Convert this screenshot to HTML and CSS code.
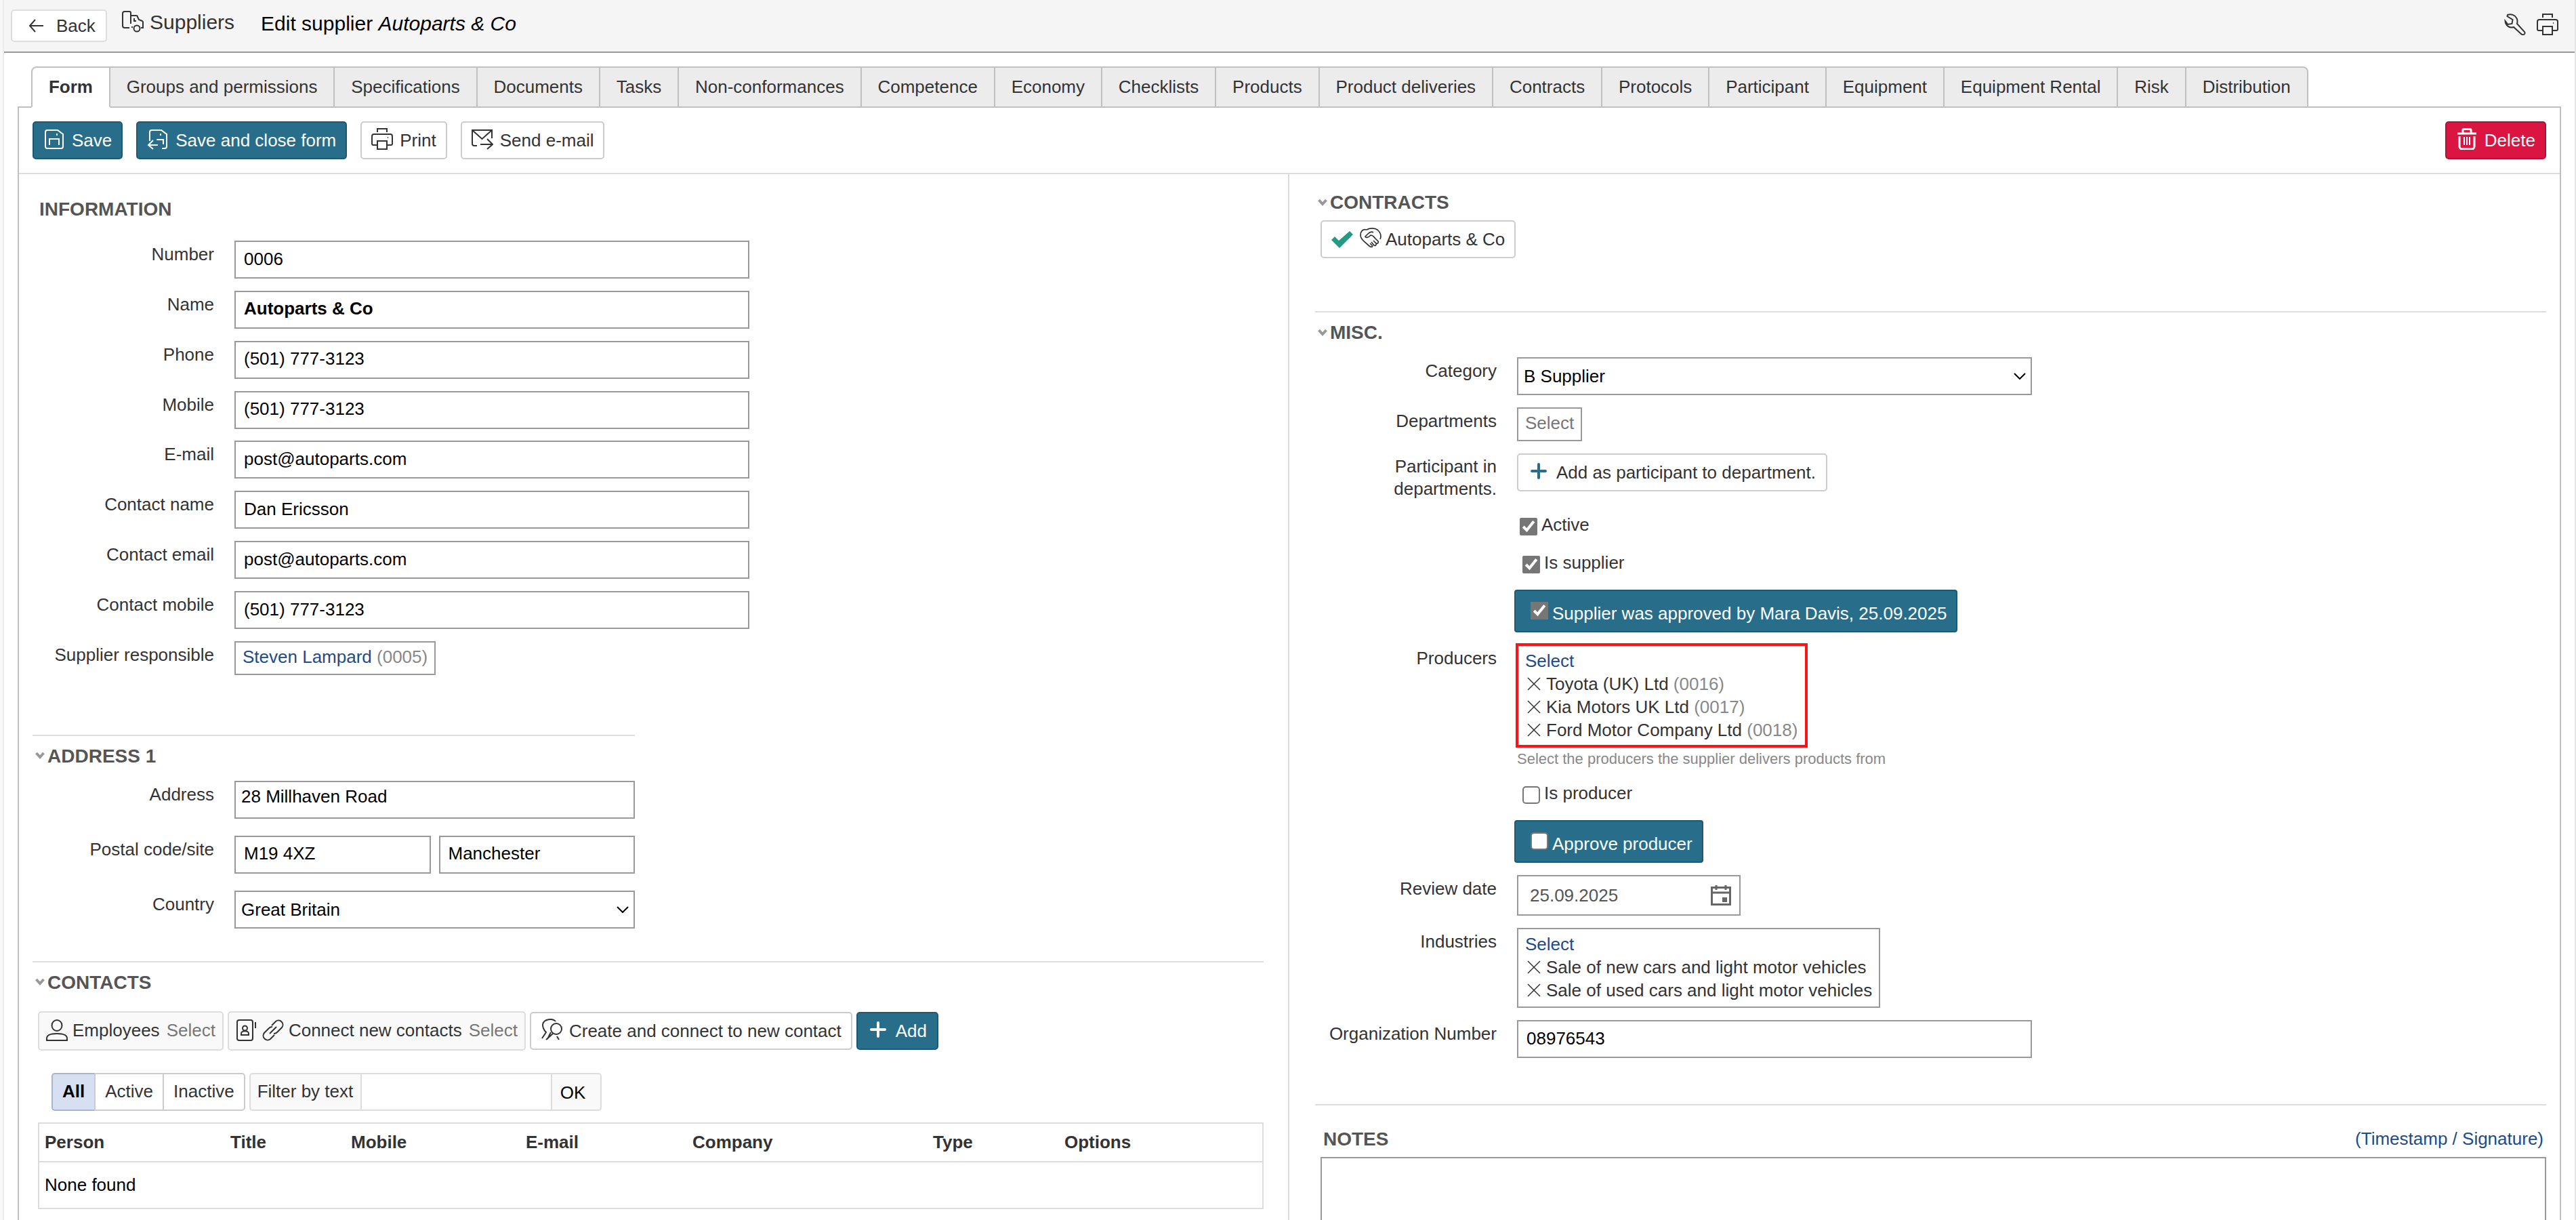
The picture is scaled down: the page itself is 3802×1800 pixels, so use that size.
FILE: index.html
```
<!DOCTYPE html>
<html lang="en">

<head>
    <meta charset="UTF-8">
    <meta name="viewport" content="width=device-width, initial-scale=1.0">
    <title>Edit supplier Autoparts &amp; Co</title>
    <link rel="stylesheet" href="styles.css">
</head>

<body>
    <div class="page">

        <header class="topbar">
            <a class="back">
                <svg class="icon" viewBox="0 0 32 32"><path d="M26 16H6M14 7L6 16l8 9" /></svg>
                Back
            </a>
            <div class="module">
                <svg class="icon" viewBox="0 0 32 32"><path d="M11 25H4a3 3 0 0 1-3-3V4a3 3 0 0 1 3-3h7a2 2 0 0 1 2 2v16M13 7h8a2 2 0 0 1 2 2l2 4 5 2a2 2 0 0 1 1 2v8h-3M18 11v4h3M14 24h2" /><circle cx="22" cy="26" r="4.500" /></svg>
                <span>Suppliers</span>
            </div>
            <div class="title">Edit supplier <i>Autoparts &amp; Co</i></div>
            <div class="tools">
                <svg class="icon" viewBox="0 0 32 32"><path d="M5 2c5-2 11 0 13.500 5 1.500 3 1 6 .5 8l11 12c2 3-2 6-5 3L14 20c-6 2-12-2-12.500-9l4 5 6-1 1-6-8-5z" /></svg>
                <svg class="icon" viewBox="0 0 32 32"><path d="M9 6V1h14v5M8 25H3a2 2 0 0 1-2-2V12a3 3 0 0 1 3-3h24a3 3 0 0 1 3 3v11a2 2 0 0 1-2 2h-5M9 19h14v12H9zM24 14h1" /></svg>
            </div>
        </header>

        <nav class="tabs">
            <a class="tab active">Form</a>
            <a class="tab">Groups and permissions</a>
            <a class="tab">Specifications</a>
            <a class="tab">Documents</a>
            <a class="tab">Tasks</a>
            <a class="tab">Non-conformances</a>
            <a class="tab">Competence</a>
            <a class="tab">Economy</a>
            <a class="tab">Checklists</a>
            <a class="tab">Products</a>
            <a class="tab">Product deliveries</a>
            <a class="tab">Contracts</a>
            <a class="tab">Protocols</a>
            <a class="tab">Participant</a>
            <a class="tab">Equipment</a>
            <a class="tab">Equipment Rental</a>
            <a class="tab">Risk</a>
            <a class="tab">Distribution</a>
        </nav>

        <main class="panel">
            <div class="toolbar">
                <a class="btn primary">
                    <svg class="icon" viewBox="0 0 32 32"><path d="M6 3h15l8 6v18a3 3 0 0 1-3 3H6a3 3 0 0 1-3-3V6a3 3 0 0 1 3-3zM9 25v-9h14v9M20 8v3" /></svg>
                    Save
                </a>
                <a class="btn primary">
                    <svg class="icon" viewBox="0 0 32 32"><path d="M4 19V6a3 3 0 0 1 3-3h14l8 6v18a3 3 0 0 1-3 3h-4M14 17h10v7M20 8v3M16 25H2M9 18l-7 7 7 6" /></svg>
                    Save and close form
                </a>
                <a class="btn">
                    <svg class="icon" viewBox="0 0 32 32"><path d="M9 6V1h14v5M8 25H3a2 2 0 0 1-2-2V12a3 3 0 0 1 3-3h24a3 3 0 0 1 3 3v11a2 2 0 0 1-2 2h-5M9 19h14v12H9zM24 14h1" /></svg>
                    Print
                </a>
                <a class="btn">
                    <svg class="icon" viewBox="0 0 32 32"><path d="M8 26H4a3 3 0 0 1-3-3V3h29v12M1 3l14.500 13L30 3M13 24h18M23 16l8 8-8 7" /></svg>
                    Send e-mail
                </a>
                <a class="btn danger">
                    <svg class="icon bold" viewBox="0 0 32 32"><path d="M2 8h28M10 7V3a1.500 1.500 0 0 1 1.500-1.500h9A1.500 1.500 0 0 1 22 3v4M5 12v15a4 4 0 0 0 4 4h14a4 4 0 0 0 4-4V12" /><path class="thin" d="M12 13v12M16 13v12M20 13v12" /></svg>
                    Delete
                </a>
            </div>

            <div class="columns">

                <!-- Left column -->
                <div class="col left">
                    <section class="information">
                        <h2>INFORMATION</h2>
                        <div class="row"><label>Number</label><input type="text" value="0006"></div>
                        <div class="row"><label>Name</label><input class="strong" type="text" value="Autoparts &amp; Co"></div>
                        <div class="row"><label>Phone</label><input type="text" value="(501) 777-3123"></div>
                        <div class="row"><label>Mobile</label><input type="text" value="(501) 777-3123"></div>
                        <div class="row"><label>E-mail</label><input type="text" value="post@autoparts.com"></div>
                        <div class="row"><label>Contact name</label><input type="text" value="Dan Ericsson"></div>
                        <div class="row"><label>Contact email</label><input type="text" value="post@autoparts.com"></div>
                        <div class="row"><label>Contact mobile</label><input type="text" value="(501) 777-3123"></div>
                        <div class="row"><label>Supplier responsible</label>
                            <div class="picker"><a class="link">Steven Lampard</a> <span class="code">(0005)</span></div>
                        </div>
                    </section>

                    <section class="address">
                        <h2><svg class="fold" viewBox="0 0 14 12"><path d="M1.500 2L7 8l5.500-6" /></svg>ADDRESS 1</h2>
                        <div class="row"><label>Address</label><textarea>28 Millhaven Road</textarea></div>
                        <div class="row"><label>Postal code/site</label>
                            <div class="pair"><input type="text" value="M19 4XZ"><input type="text" value="Manchester"></div>
                        </div>
                        <div class="row"><label>Country</label>
                            <div class="select">Great Britain<svg viewBox="0 0 18 10"><path d="M1 1l8 8 8-8" /></svg></div>
                        </div>
                    </section>

                    <section class="contacts">
                        <h2><svg class="fold" viewBox="0 0 14 12"><path d="M1.500 2L7 8l5.500-6" /></svg>CONTACTS</h2>
                        <div class="actions">
                            <div class="group">
                                <svg class="icon" viewBox="0 0 32 32"><ellipse cx="16" cy="9" rx="7.500" ry="8" /><path d="M1 31v-3c0-4 5-7 15-7s15 3 15 7v3z" /></svg>
                                <span>Employees</span>
                                <span class="muted">Select</span>
                            </div>
                            <div class="group">
                                <svg class="icon" viewBox="0 0 32 32"><rect x="2" y="1" width="23" height="30" rx="3" /><circle cx="13.500" cy="13" r="3.500" /><path d="M8 23v-2c0-5 11-5 11 0v2zM29 4v9" /></svg>
                                <svg class="icon" viewBox="0 0 32 32"><path d="M11 21L21 11M14 9l6-6a6.400 6.400 0 0 1 9 9l-7 7a6.400 6.400 0 0 1-5 2M18 23l-6 6a6.400 6.400 0 0 1-9-9l7-7a6.400 6.400 0 0 1 5-2" /></svg>
                                <span>Connect new contacts</span>
                                <span class="muted">Select</span>
                            </div>
                            <a class="btn">
                                <svg class="icon" viewBox="0 0 32 32"><circle cx="23" cy="15" r="8" /><path d="M22 4C18-1 4 0 3 9c0 5 2 8 5 11l-6 9M18 22L8 31M24 26l3 5M15 20l-5 10" /></svg>
                                Create and connect to new contact
                            </a>
                            <a class="btn primary add">
                                <svg class="plus" viewBox="0 0 24 24"><path d="M12 2v20M2 12h20" /></svg>
                                Add
                            </a>
                        </div>
                        <div class="filters">
                            <div class="segments">
                                <a class="segment selected">All</a>
                                <a class="segment">Active</a>
                                <a class="segment">Inactive</a>
                            </div>
                            <div class="search">
                                <span>Filter by text</span>
                                <input type="text">
                                <a>OK</a>
                            </div>
                        </div>
                        <table>
                            <thead>
                                <tr>
                                    <th class="person">Person</th>
                                    <th class="job">Title</th>
                                    <th class="mobile">Mobile</th>
                                    <th class="mail">E-mail</th>
                                    <th class="company">Company</th>
                                    <th class="type">Type</th>
                                    <th>Options</th>
                                </tr>
                            </thead>
                            <tbody>
                                <tr>
                                    <td colspan="7">None found</td>
                                </tr>
                            </tbody>
                        </table>
                    </section>
                </div>

                <!-- Right column -->
                <div class="col right">
                    <section class="contracts">
                        <h2><svg class="fold" viewBox="0 0 14 12"><path d="M1.500 2L7 8l5.500-6" /></svg>CONTRACTS</h2>
                        <a class="btn contract">
                            <svg class="tick" viewBox="0 0 32 25"><path d="M0 13l5-5 6 6L27 0l5 5-20 20z" /></svg>
                            <svg class="icon" viewBox="0 0 32 30"><path d="M10 3C4 1 1 6 1 11c0 4 3 7 5 9l8 7c2 1.500 4 2 5 0M10 3c5-3 13-3 17 1 4 4 5 8 3 13M20 7c-3-2-6 0-8 2l-4 4c1 3 5 1 8-2 4 0 5 3 7 5l4 4c1 2-1 4-3 3l-4-4M24 23c1 2-1 4-3 3l-4-5M19 27l-4-4" /></svg>
                            Autoparts &amp; Co
                        </a>
                    </section>

                    <section class="misc">
                        <h2><svg class="fold" viewBox="0 0 14 12"><path d="M1.500 2L7 8l5.500-6" /></svg>MISC.</h2>
                        <div class="row"><label>Category</label>
                            <div class="select">B Supplier<svg viewBox="0 0 18 10"><path d="M1 1l8 8 8-8" /></svg></div>
                        </div>
                        <div class="row"><label>Departments</label>
                            <div class="picker"><span class="muted">Select</span></div>
                        </div>
                        <div class="row participant"><label>Participant in departments.</label>
                            <a class="btn add">
                                <svg class="plus" viewBox="0 0 24 24"><path d="M12 2v20M2 12h20" /></svg>
                                Add as participant to department.
                            </a>
                        </div>
                        <div class="row check first"><input type="checkbox" checked>Active</div>
                        <div class="row check"><input type="checkbox" checked>Is supplier</div>
                        <div class="row approve"><span class="banner"><input type="checkbox" checked>Supplier was approved by Mara Davis, 25.09.2025</span></div>
                        <div class="row"><label>Producers</label>
                            <div>
                                <div class="list marked">
                                    <a class="link">Select</a>
                                    <div class="item"><svg viewBox="0 0 20 20"><path d="M1 1l18 18M19 1L1 19" /></svg><span>Toyota (UK) Ltd <span class="code">(0016)</span></span></div>
                                    <div class="item"><svg viewBox="0 0 20 20"><path d="M1 1l18 18M19 1L1 19" /></svg><span>Kia Motors UK Ltd <span class="code">(0017)</span></span></div>
                                    <div class="item"><svg viewBox="0 0 20 20"><path d="M1 1l18 18M19 1L1 19" /></svg><span>Ford Motor Company Ltd <span class="code">(0018)</span></span></div>
                                </div>
                                <div class="hint">Select the producers the supplier delivers products from</div>
                            </div>
                        </div>
                        <div class="row check producer"><input type="checkbox">Is producer</div>
                        <div class="row approve"><span class="banner"><input type="checkbox">Approve producer</span></div>
                        <div class="row"><label>Review date</label>
                            <div class="date">25.09.2025<svg viewBox="0 0 30 30"><path d="M1.500 3.500h27v25h-27zM1 11h28M8 0v7M22 0v7" /><rect x="17" y="18" width="7" height="7" /></svg></div>
                        </div>
                        <div class="row"><label>Industries</label>
                            <div class="list">
                                <a class="link">Select</a>
                                <div class="item"><svg viewBox="0 0 20 20"><path d="M1 1l18 18M19 1L1 19" /></svg><span>Sale of new cars and light motor vehicles</span></div>
                                <div class="item"><svg viewBox="0 0 20 20"><path d="M1 1l18 18M19 1L1 19" /></svg><span>Sale of used cars and light motor vehicles</span></div>
                            </div>
                        </div>
                        <div class="row"><label>Organization Number</label><input type="text" value="08976543"></div>
                    </section>

                    <section class="notes">
                        <div class="notes-head">
                            <h2>NOTES</h2>
                            <a class="link">(Timestamp / Signature)</a>
                        </div>
                        <textarea></textarea>
                    </section>
                </div>
            </div>
        </main>
    </div>
</body>

</html>
```

FILE: styles.css
```
* {
    box-sizing: border-box;
}

body {
    margin: 0;
    background-color: #f8f8f8;
    color: #333;
    font-family: "Liberation Sans", Arial, sans-serif;
    font-size: 26px;
    line-height: 34px;
}

.page {
    height: 1800px;
    margin-left: 4px;
    border-left: 2px solid #ececec;
    border-right: 2px solid #e5e5e5;
    background-color: #fff;
    overflow: hidden;
    display: flex;
    flex-direction: column;
}

svg {
    display: block;
    flex: none;
    fill: none;
    stroke: currentColor;
    stroke-width: 2;
}

.icon {
    width: 32px;
    height: 32px;
}

.icon.bold {
    stroke-width: 3;
}

.icon .thin {
    stroke-width: 2;
}

.link {
    color: #204a8c;
}

.code {
    color: #888;
}

.muted {
    color: #777;
}

/* Top bar */

.topbar {
    flex: none;
    height: 78px;
    padding: 14px 24px 0 10px;
    background-color: #f5f5f5;
    border-bottom: 2px solid #999;
    display: flex;
    align-items: flex-start;
    font-size: 30px;
}

.back {
    width: 142px;
    height: 48px;
    padding-left: 20px;
    border: 2px solid #ddd;
    border-radius: 5px;
    background-color: #fff;
    display: flex;
    align-items: center;
    gap: 13px;
    font-size: 26px;
}

.module {
    display: flex;
    gap: 9px;
    margin: 2px 0 0 22px;
}

.title {
    margin: 4px 0 0 39px;
    color: #000;
}

.tools {
    display: flex;
    gap: 16px;
    margin: 6px 0 0 auto;
}

/* Tabs */

.tabs {
    display: flex;
    padding: 20px 0 0 40px;
    margin-bottom: -2px;
    position: relative;
}

.tab {
    height: 61px;
    padding: 0 23.900px;
    border: 2px solid #c0c0c0;
    border-left: none;
    background-color: #ececec;
    line-height: 57px;
}

.tab.active {
    border-left: 2px solid #c0c0c0;
    border-bottom-color: #fff;
    border-top-left-radius: 8px;
    background-color: #fff;
    font-weight: bold;
}

.tab:last-child {
    border-top-right-radius: 8px;
}

/* Panel */

.panel {
    flex: 1;
    margin: 0 20px;
    border: 2px solid #c0c0c0;
    border-bottom: none;
    display: flex;
    flex-direction: column;
}

.toolbar {
    height: 98px;
    padding: 20px 20px 0;
    border-bottom: 2px solid #ddd;
    display: flex;
    align-items: flex-start;
    gap: 20px;
}

.btn {
    height: 56px;
    padding: 0 14px;
    border: 2px solid #ccc;
    border-radius: 5px;
    background-color: #fff;
    display: inline-flex;
    align-items: center;
    gap: 10px;
    white-space: nowrap;
}

.btn .icon {
    margin-bottom: 4px;
}

.btn.primary {
    border-color: #1f5870;
    background-color: #286e8a;
    color: #fff;
}

.btn.danger {
    margin-left: auto;
    border-color: #b01035;
    background-color: #db1541;
    color: #fff;
}

.plus {
    width: 24px;
    height: 24px;
    margin-bottom: 4px;
    stroke-width: 4;
    stroke-linecap: round;
    color: #286e8a;
}

.primary .plus {
    color: #fff;
}

.btn.add {
    padding: 0 15px 0 18px;
    gap: 14px;
}

.columns {
    flex: 1;
    display: flex;
}

.left {
    width: 1875px;
    padding: 34px 36px 0 20px;
    border-right: 2px solid #ddd;
}

.right {
    flex: 1;
    padding: 24px 20px 0 38px;
}

h2 {
    margin: 0;
    padding-left: 4px;
    color: #555;
    font-size: 28px;
    line-height: 35px;
    display: flex;
    align-items: center;
    gap: 4px;
}

.fold {
    width: 14px;
    height: 12px;
    stroke-width: 4;
    color: #999;
}

/* Form rows */

.row {
    display: flex;
    align-items: flex-start;
    margin-bottom: 18px;
}

.row label {
    width: 268px;
    margin-right: 30px;
    padding-top: 3px;
    text-align: right;
}

.row input[type=text],
.select,
textarea {
    width: 760px;
    height: 56px;
    margin: 0;
    padding: 0 12px 2px;
    border: 2px solid #999;
    background-color: #fff;
    color: #000;
    font: inherit;
}

.row input.strong {
    font-weight: bold;
}

.select {
    padding: 0 7px 0 8px;
    display: flex;
    align-items: center;
    justify-content: space-between;
}

.select svg {
    width: 18px;
    height: 10px;
}

textarea {
    display: block;
    padding: 4px 8px;
    resize: none;
    overflow: hidden;
}

.picker {
    height: 50px;
    padding: 4px 10px;
    border: 2px solid #999;
}

.information h2 {
    padding-left: 10px;
    margin-bottom: 29px;
}

.information .row {
    margin-bottom: 17.860px;
}

.address {
    width: 889px;
    margin-top: 88px;
}

.address,
.contacts,
.misc,
.notes {
    border-top: 2px solid #ddd;
    padding-top: 12px;
}

.address h2,
.misc h2 {
    margin-bottom: 19px;
}

.address .row {
    margin-bottom: 25px;
}

.address .select,
.address textarea {
    width: 591px;
}

.pair {
    display: flex;
    gap: 12px;
}

.pair input[type=text] {
    width: 289.500px;
}

/* Contacts */

.contacts {
    margin-top: 48px;
}

.contacts h2 {
    margin-bottom: 25px;
}

.actions {
    display: flex;
    align-items: center;
    gap: 6px;
    padding-left: 8px;
}

.group {
    height: 58px;
    padding: 0 10px 2px;
    border: 2px solid #ddd;
    border-radius: 5px;
    background-color: #f9f9f9;
    display: flex;
    align-items: center;
    gap: 7px;
}

.group .muted {
    margin-left: 3px;
}

.filters {
    display: flex;
    gap: 6px;
    padding: 33px 0 17px 28px;
}

.segments {
    display: flex;
}

.segment {
    height: 56px;
    padding: 0 14px;
    border: 2px solid #ccc;
    border-left: none;
    line-height: 51px;
}

.segment.selected {
    border: 2px solid #aab6c8;
    border-right-color: #ccc;
    border-radius: 5px 0 0 5px;
    background-color: #d6e0f2;
    color: #000;
    font-weight: bold;
}

.segment:last-child {
    border-radius: 0 5px 5px 0;
}

.search {
    width: 520px;
    height: 56px;
    border: 2px solid #ddd;
    border-radius: 5px;
    background-color: #f9f9f9;
    display: flex;
    line-height: 51px;
}

.search span {
    width: 162px;
    padding-left: 10px;
}

.search input {
    width: 283px;
    border: 2px solid #ddd;
    border-width: 0 2px;
    background-color: #fff;
}

.search a {
    padding-left: 12px;
    color: #000;
    line-height: 54px;
}

table {
    width: 1809px;
    margin-left: 8px;
    border: 2px solid #ddd;
    border-spacing: 0;
    table-layout: fixed;
}

th {
    height: 57px;
    padding: 0 8px 0 9px;
    border-bottom: 2px solid #ddd;
    text-align: left;
}

td {
    height: 67px;
    padding: 0 8px;
    color: #000;
}

.person {
    width: 273px;
    padding-left: 8px;
}

.job {
    width: 178px;
}

.mobile {
    width: 258px;
}

.mail {
    width: 246px;
}

.company {
    width: 355px;
}

.type {
    width: 194px;
}

/* Right column */

.contracts {
    height: 178px;
}

.contracts h2 {
    margin-bottom: 9px;
}

.contract {
    margin-left: 8px;
    gap: 6px;
}

.contract .tick {
    width: 32px;
    height: 25px;
    margin-right: 4px;
    fill: #239a83;
    stroke: none;
}

.contract .icon {
    height: 30px;
    stroke-width: 1.700;
}

.participant {
    height: 70px;
}

.participant label {
    padding-left: 90px;
    line-height: 33px;
}

.check {
    height: 34px;
    padding-left: 306px;
    margin-bottom: 22px;
}

.check.first {
    padding-left: 302px;
}

.check + .approve {
    margin-top: 23px;
}

.check:has(+ .approve) {
    margin-bottom: 0;
}

input[type=checkbox] {
    width: 26px;
    height: 26px;
    margin: 7px 6px 0 0;
    accent-color: #767676;
}

input[type=checkbox]:not(:checked) {
    appearance: none;
    border: 2px solid #767676;
    border-radius: 5px;
    background-color: #fff;
}

.approve {
    padding-left: 294px;
}

.banner {
    height: 63px;
    padding: 16px 14px 0 22px;
    border: 2px solid #1f5870;
    border-radius: 4px;
    background-color: #286e8a;
    color: #fff;
    display: flex;
}

.banner input[type=checkbox] {
    margin-top: 0;
}

.list {
    padding: 5px 10px 7px;
    border: 2px solid #999;
}

.list.marked {
    width: 431px;
    margin: -2px 0 0 -2px;
    padding: 5px 10px;
    border: 4px solid #fb1318;
}

.list .link {
    display: block;
}

.item {
    display: flex;
    align-items: center;
    gap: 8px;
    padding-left: 3px;
}

.item svg {
    width: 20px;
    height: 20px;
    stroke-width: 1.500;
}

.hint {
    margin-top: 2px;
    margin-bottom: 1px;
    color: #888;
    font-size: 22px;
    line-height: 29px;
}

.date {
    width: 330px;
    height: 60px;
    padding: 0 12px 0 17px;
    border: 2px solid #999;
    color: #555;
    display: flex;
    align-items: center;
    justify-content: space-between;
}

.date svg {
    width: 30px;
    height: 30px;
    stroke-width: 3;
    color: #666;
}

.date rect {
    fill: #666;
    stroke: none;
}

.notes {
    margin-top: 68px;
    padding-top: 32px;
}

.notes-head {
    display: flex;
    justify-content: space-between;
    padding: 0 4px 0 8px;
    margin-bottom: 9px;
}

.notes textarea {
    width: 1809px;
    height: 120px;
    margin-left: 8px;
}
```
